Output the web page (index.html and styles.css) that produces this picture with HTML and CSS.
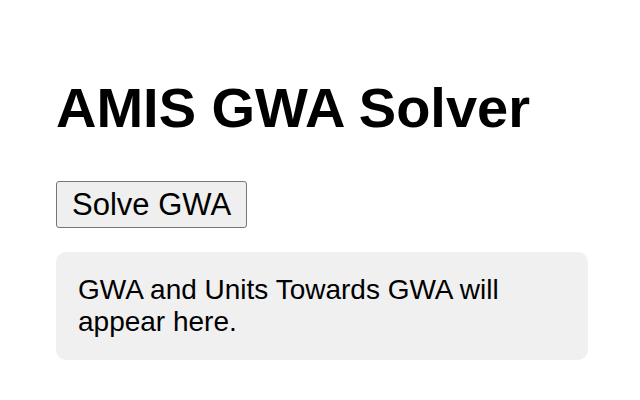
FILE: index.html
```html
<!DOCTYPE html>
<html lang="en">
<head>
    <meta charset="UTF-8">
    <meta name="viewport" content="width=device-width, initial-scale=1.0">
    <title>AMIS GWA Solver</title>
    <link rel="stylesheet" href="styles.css">
</head>
<body>
    <div class="container">
        <h1>AMIS GWA Solver</h1>
        <button id="solveBtn">Solve GWA</button>
        <div id="result" class="result">GWA and Units Towards GWA will appear here.</div>
    </div>
</body>
</html>
```

FILE: styles.css
```css
body {
    margin: 0;
    padding: 0;
    background-color: #ffffff;
    color: #000000;
    font-family: 'Liberation Sans', Arial, sans-serif;
}

.container {
    width: 532px;
    padding: 76px 0 0 56px;
    display: flex;
    flex-direction: column;
    align-items: flex-start;
}

h1 {
    margin: 0 0 41px 0;
    font-size: 56px;
    font-weight: bold;
    line-height: 64px;
}

button {
    height: 47px;
    padding: 0 15px;
    font-family: 'Liberation Sans', Arial, sans-serif;
    font-size: 31px;
    color: #000000;
    background-color: #efefef;
    border: 1px solid #767676;
    border-radius: 3px;
    cursor: pointer;
}

button:hover {
    background-color: #e5e5e5;
}

.result {
    box-sizing: border-box;
    width: 100%;
    margin-top: 24px;
    padding: 22px;
    background-color: #f0f0f0;
    border-radius: 10px;
    font-size: 28px;
    line-height: 32px;
}
```
